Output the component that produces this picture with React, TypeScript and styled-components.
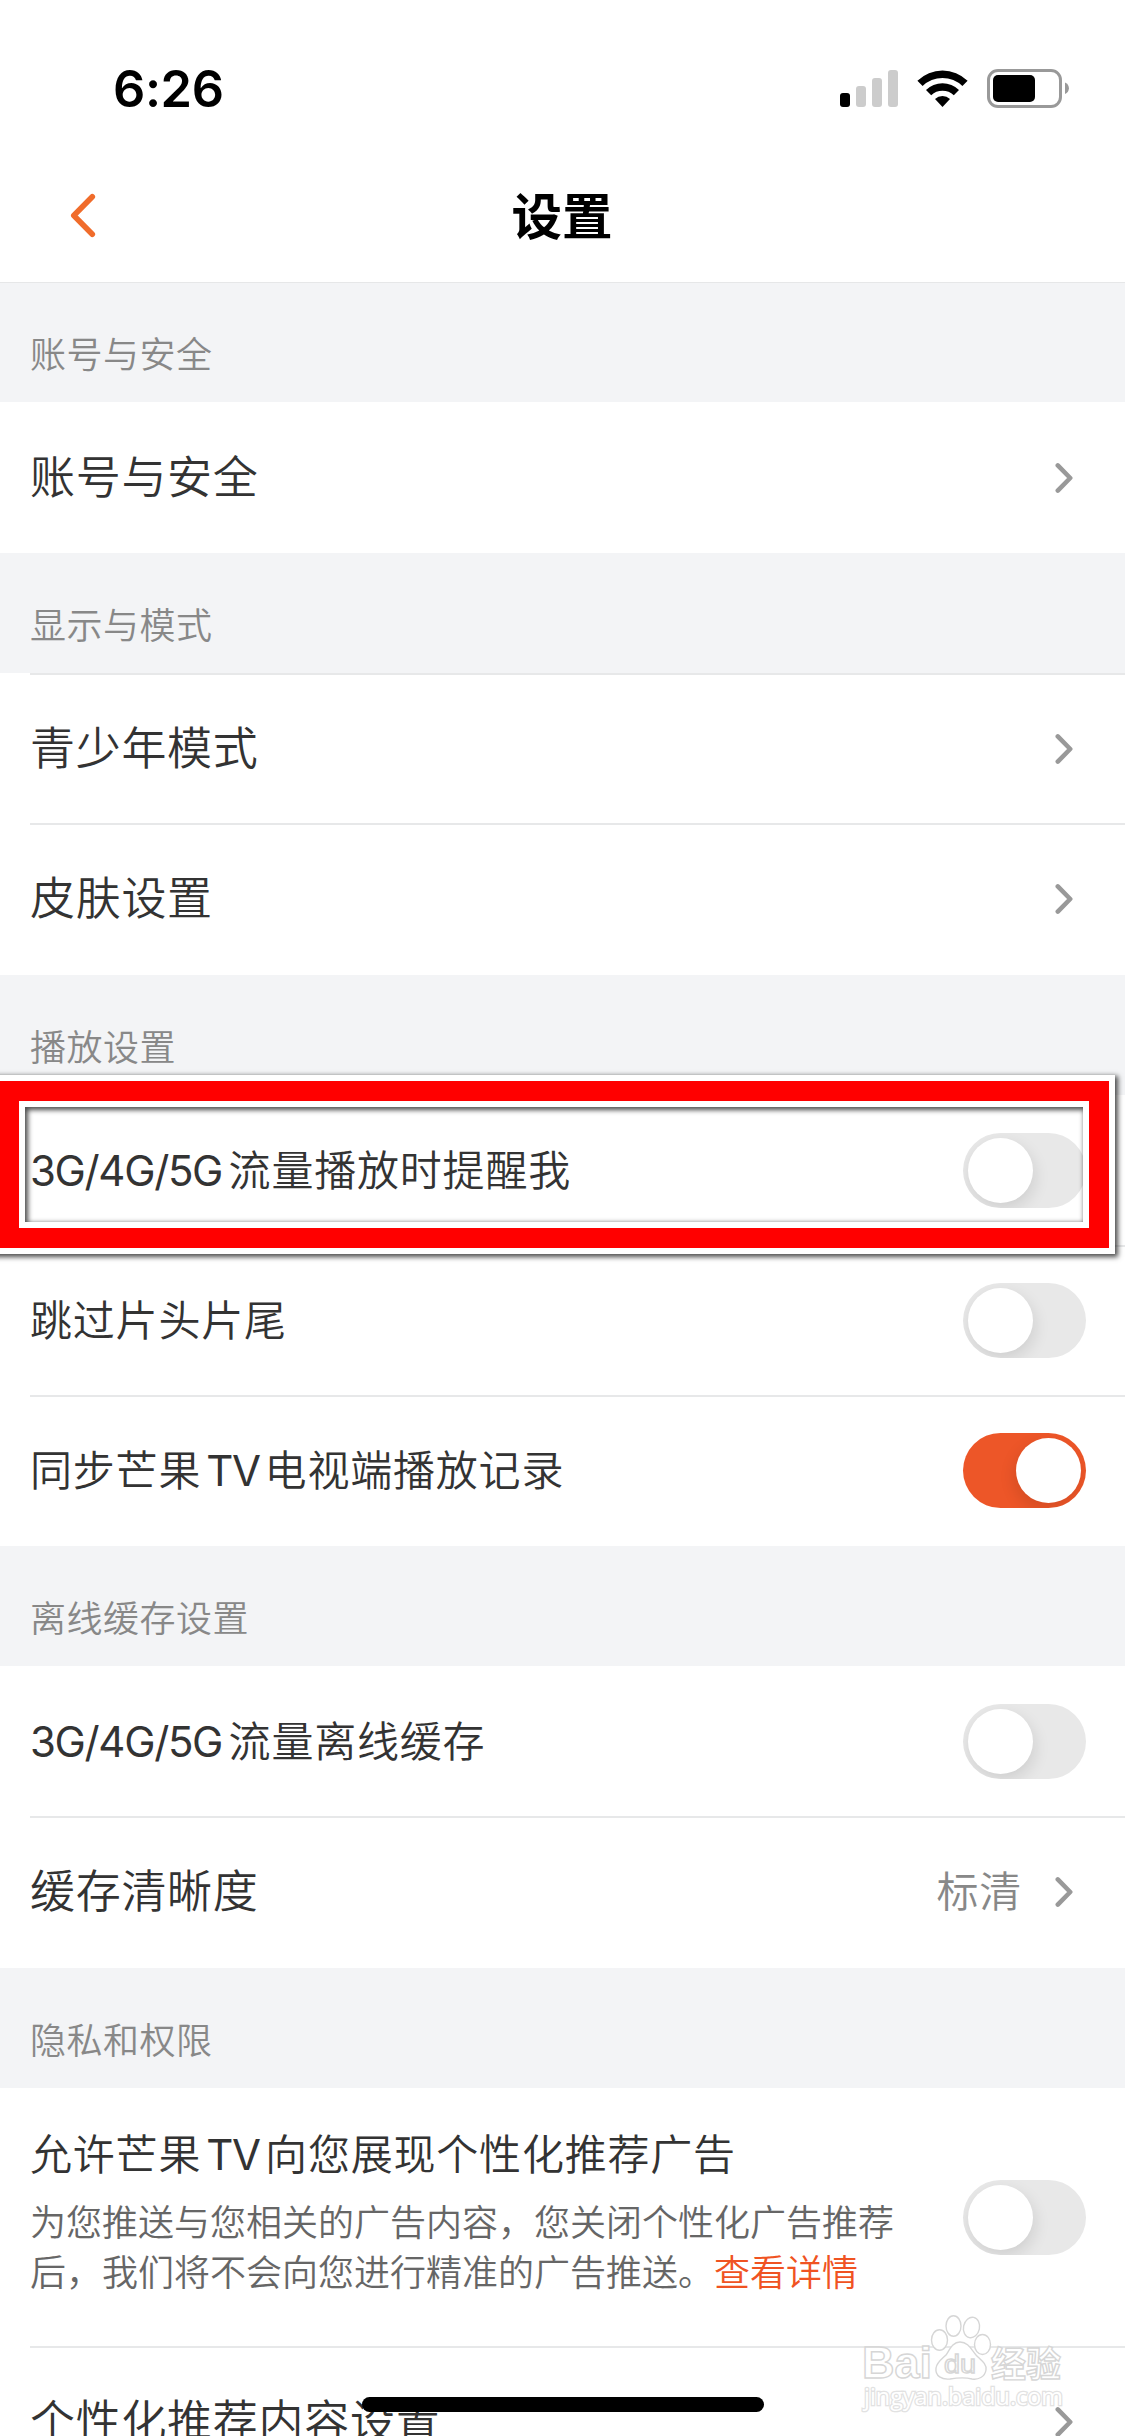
import React from 'react';
import styled, { createGlobalStyle } from 'styled-components';

const GlobalStyle = createGlobalStyle`
  body {
    margin: 0;
    background: #fff;
    font-family: "Noto Sans CJK SC", "Liberation Sans", sans-serif;
  }
  * { box-sizing: border-box; }
`;

const Screen = styled.div`
  position: relative;
  width: 1125px;
  height: 2436px;
  overflow: hidden;
  background: #fff;
  color: #333;
`;

const StatusBar = styled.header`
  display: flex;
  align-items: center;
  justify-content: space-between;
  height: 132px;
  padding: 46px 56px 0 113px;
`;

const Clock = styled.span`
  font: 600 50.5px/60px Inter, "Liberation Sans", sans-serif;
  letter-spacing: -0.4px;
  color: #000;
`;

const StatusIcons = styled.svg`
  display: block;
  width: 229px;
  height: 40px;
`;

const NavBar = styled.nav`
  display: grid;
  grid-template-columns: 200px 1fr 200px;
  align-items: center;
  height: 151px;
  padding-bottom: 1px;
  border-bottom: 1px solid #e6e7e8;
`;

const BackIcon = styled.svg`
  width: 26px;
  height: 45px;
  margin: 17px 0 0 69.5px;
`;

const Title = styled.h1`
  margin: 13px 1px 0 0;
  text-align: center;
  font-size: 50.5px;
  line-height: 60px;
  font-weight: 700;
  color: #000;
`;

const SectionTitle = styled.h2<{ $h?: number }>`
  display: flex;
  align-items: center;
  height: ${(p) => p.$h ?? 120}px;
  margin: 0;
  padding: 19px 30px 0;
  background: #f3f4f6;
  color: #888;
  font-size: 36px;
  line-height: 50px;
  font-weight: 350;
  letter-spacing: 0.5px;
`;

const Row = styled.div<{ $h?: number; $line?: boolean }>`
  display: flex;
  align-items: center;
  height: ${(p) => p.$h ?? 150}px;
  padding: 1px 39px ${(p) => (p.$h ?? 150) - 150}px 30px;
  background: ${(p) =>
    p.$line ? 'linear-gradient(#e7e8e9, #e7e8e9) 30px 0 / 100% 2px no-repeat #fff' : '#fff'};
`;

const Label = styled.span<{ $small?: boolean }>`
  flex: 1;
  margin-top: -6px;
  white-space: nowrap;
  font-size: ${(p) => (p.$small ? 42 : 45)}px;
  line-height: 60px;
  font-weight: 350;
  letter-spacing: ${(p) => (p.$small ? 0.8 : 0.7)}px;
`;

const Latin = styled.span<{ $gap?: number; $after?: number }>`
  font-family: Inter, "Liberation Sans", sans-serif;
  font-weight: 400;
  line-height: 1;
  letter-spacing: -1.35px;
  margin: 0 ${(p) => p.$after ?? 6.5}px 0 ${(p) => p.$gap ?? 0}px;
`;

const Value = styled.span`
  margin: -6px 33px 0 0;
  color: #888;
  font-size: 42px;
  line-height: 60px;
  font-weight: 350;
  letter-spacing: 0.8px;
`;

const ArrowIcon = styled.svg`
  width: 18px;
  height: 32px;
  margin-right: 13px;
`;

const Track = styled.span<{ $on?: boolean }>`
  display: flex;
  justify-content: ${(p) => (p.$on ? 'flex-end' : 'flex-start')};
  width: 123px;
  height: 75px;
  padding: 5px;
  overflow: hidden;
  border-radius: 38px;
  background: ${(p) => (p.$on ? '#ed5628' : '#e8e8e8')};
`;

const Knob = styled.span<{ $on?: boolean }>`
  width: 65px;
  height: 65px;
  border-radius: 50%;
  background: #fff;
  box-shadow: ${(p) => (p.$on ? '-2px' : '2px')} 6px 16px rgba(0, 0, 0, 0.11);
`;

const AdRow = styled.div`
  display: flex;
  align-items: center;
  justify-content: space-between;
  height: 258px;
  padding: 0 39px 0 30px;
`;

const AdText = styled.div`
  display: flex;
  flex-direction: column;
  gap: 13px;
  align-self: flex-start;
  padding-top: 40px;
`;

const Description = styled.p`
  margin: 0;
  color: #666;
  font-size: 36px;
  line-height: 50px;
  font-weight: 350;
  white-space: nowrap;
`;

const Link = styled.a`
  color: #f05322;
`;

const Highlight = styled.div`
  position: absolute;
  left: -7px;
  top: 1075px;
  width: 1121.5px;
  height: 179px;
  border: 6px solid #fff;
  box-shadow: 2px 2px 5px 1px rgba(0, 0, 0, 0.7);
`;

const RedFrame = styled.div`
  height: 100%;
  border: 20px solid #f00;
`;

const InnerFrame = styled.div`
  height: 100%;
  border: 6px solid #fff;
  box-shadow: inset 2px 2px 5px 1px rgba(0, 0, 0, 0.7);
`;

const HomeIndicator = styled.div`
  position: absolute;
  left: 362px;
  top: 2397px;
  width: 402px;
  height: 15px;
  border-radius: 8px;
  background: #000;
`;

const Watermark = styled.svg`
  position: absolute;
  left: 850px;
  top: 2300px;
  width: 230px;
  height: 136px;
`;

const Arrow = () => (
  <ArrowIcon viewBox="0 0 18 32" fill="none" stroke="#999" strokeWidth="4.6" strokeLinecap="round" strokeLinejoin="round">
    <path d="M2.8 3.4 15.2 16 2.8 28.6" />
  </ArrowIcon>
);

const Toggle = ({ on }: { on?: boolean }) => (
  <Track $on={on}>
    <Knob $on={on} />
  </Track>
);

const NavRow = ({ text, value, h, line }: { text: string; value?: string; h?: number; line?: boolean }) => (
  <Row $h={h} $line={line}>
    <Label>{text}</Label>
    {value && <Value>{value}</Value>}
    <Arrow />
  </Row>
);

export default function App() {
  return (
    <>
      <GlobalStyle />
      <Screen>
        <StatusBar>
          <Clock>6:26</Clock>
          <StatusIcons viewBox="840 69 229 40">
            <rect x="840" y="93" width="10" height="14" rx="3" />
            <g fill="#ccc">
              <rect x="856" y="86" width="10" height="21" rx="3" />
              <rect x="872" y="78" width="10" height="29" rx="3" />
              <rect x="888" y="70" width="10" height="37" rx="3" />
            </g>
            <path d="M917.4 80.8A36 36 0 0 1 967.6 80.8L962.4 86A28.5 28.5 0 0 0 922.6 86Z" />
            <path d="M926 90A23.5 23.5 0 0 1 959 90L953.8 95.2A16.5 16.5 0 0 0 931.2 95.2Z" />
            <path d="M935 98.9A11.3 11.3 0 0 1 950 98.9L942.5 107Z" />
            <rect x="988.5" y="70.5" width="72" height="36" rx="9.5" fill="none" stroke="#999" strokeWidth="3" />
            <rect x="993" y="75" width="42" height="27" rx="5" />
            <path d="M1065 82.5c5.2 2 5.2 9.6 0 11.6Z" fill="#999" />
          </StatusIcons>
        </StatusBar>
        <NavBar>
          <BackIcon viewBox="0 0 26 45" fill="none" stroke="#f06c2b" strokeWidth="5.6" strokeLinecap="round" strokeLinejoin="round">
            <path d="M22.3 3.7 3.8 22.5 22.3 41.3" />
          </BackIcon>
          <Title>设置</Title>
        </NavBar>

        <SectionTitle $h={119}>账号与安全</SectionTitle>
        <NavRow text="账号与安全" h={151} />

        <SectionTitle>显示与模式</SectionTitle>
        <NavRow text="青少年模式" line />
        <NavRow text="皮肤设置" h={152} line />

        <SectionTitle>播放设置</SectionTitle>
        <Row>
          <Label $small><Latin>3G/4G/5G</Latin>流量播放时提醒我</Label>
          <Toggle />
        </Row>
        <Row $line>
          <Label $small>跳过片头片尾</Label>
          <Toggle />
        </Row>
        <Row $h={151} $line>
          <Label $small>同步芒果<Latin $gap={5} $after={5}>TV</Latin>电视端播放记录</Label>
          <Toggle on />
        </Row>

        <SectionTitle>离线缓存设置</SectionTitle>
        <Row>
          <Label $small><Latin>3G/4G/5G</Latin>流量离线缓存</Label>
          <Toggle />
        </Row>
        <NavRow text="缓存清晰度" value="标清" h={152} line />

        <SectionTitle>隐私和权限</SectionTitle>
        <AdRow>
          <AdText>
            <Label $small>允许芒果<Latin $gap={5} $after={5.5}>TV</Latin>向您展现个性化推荐广告</Label>
            <Description>
              为您推送与您相关的广告内容，您关闭个性化广告推荐
              <br />
              后，我们将不会向您进行精准的广告推送。<Link>查看详情</Link>
            </Description>
          </AdText>
          <Toggle />
        </AdRow>
        <NavRow text="个性化推荐内容设置" line />

        <Highlight>
          <RedFrame>
            <InnerFrame />
          </RedFrame>
        </Highlight>
        <HomeIndicator />
        <Watermark viewBox="0 0 230 136" fill="#fff" stroke="#d6d6d6" strokeWidth="1.4">
          <text x="12" y="78" fontFamily="'Liberation Sans', sans-serif" fontWeight="700" fontSize="45" textLength="70" lengthAdjust="spacingAndGlyphs">Bai</text>
          <ellipse cx="89.5" cy="40" rx="8" ry="10.3" />
          <ellipse cx="103.5" cy="26" rx="7.5" ry="10.3" />
          <ellipse cx="121.5" cy="27.5" rx="8" ry="10.3" transform="rotate(12 121.5 27.5)" />
          <ellipse cx="132.5" cy="44.5" rx="8" ry="10" />
          <path d="M110 42c8 0 11 7 16 13 5 5 11 9 10 15-1 7-8 10-14 9-8-2-16-1-22 0-8 1-15-3-14-11 1-6 6-9 10-13 4-6 7-13 14-13Z" />
          <text x="94" y="73" fontFamily="'Liberation Sans', sans-serif" fontSize="25" textLength="32" lengthAdjust="spacingAndGlyphs">du</text>
          <text x="141" y="77" fontFamily="'Noto Sans CJK SC', sans-serif" fontWeight="700" fontSize="35" textLength="70">经验</text>
          <text x="14" y="105" fontFamily="'Open Sans', sans-serif" fontSize="24" textLength="199" lengthAdjust="spacingAndGlyphs" paintOrder="stroke" strokeWidth="2.6" stroke="#e2e2e2">jingyan.baidu.com</text>
        </Watermark>
      </Screen>
    </>
  );
}
